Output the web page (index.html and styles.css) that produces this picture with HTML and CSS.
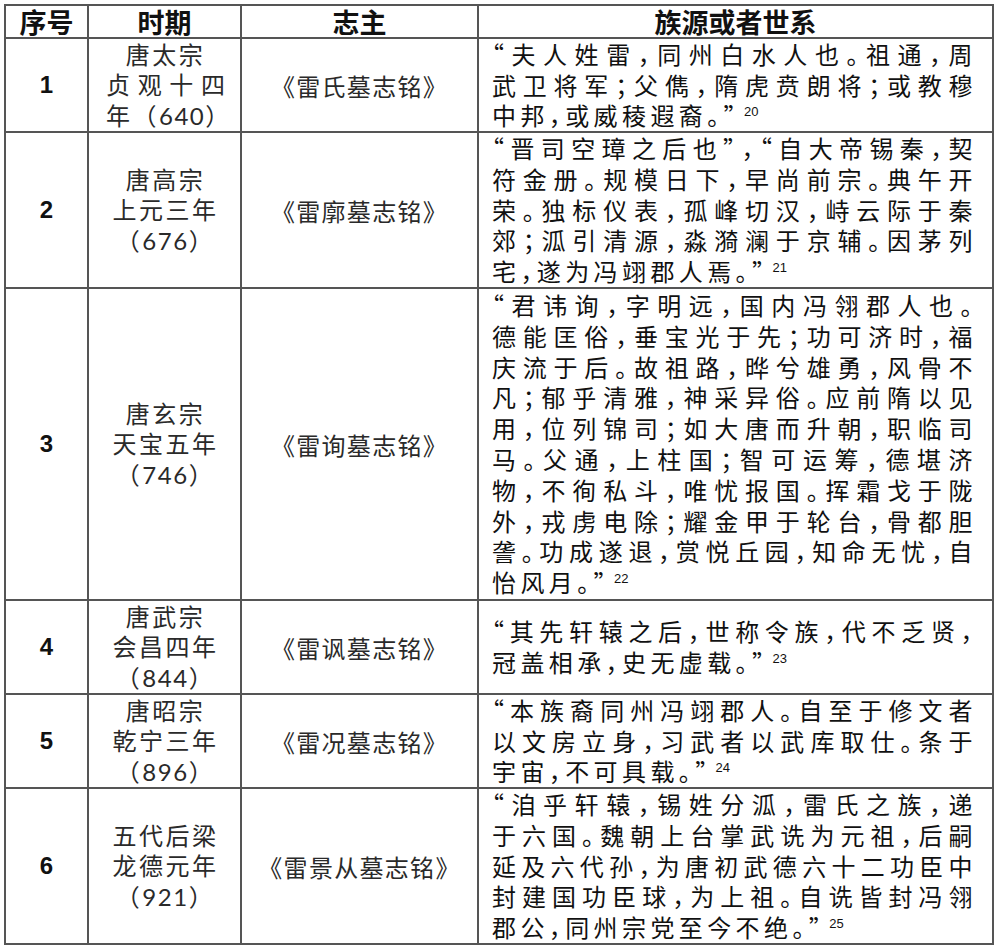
FILE: index.html
```html
<!DOCTYPE html>
<html lang="zh-CN">
<head>
<meta charset="utf-8">
<title>雷氏墓志铭族源表</title>
<link rel="stylesheet" href="styles.css">
</head>
<body>
<div class="tbl">
  <div class="c h">序号</div>
  <div class="c h">时期</div>
  <div class="c h">志主</div>
  <div class="c h">族源或者世系</div>

  <div class="c n">1</div>
  <div class="c p"><span class="ln">唐太宗</span><span class="ln j">贞观十四</span><span class="ln">年（<span class="d">640</span>）</span></div>
  <div class="c t">《雷氏墓志铭》</div>
  <div class="c s">
    <span class="ln j">“夫人姓雷，同州白水人也。祖通，周</span>
    <span class="ln j">武卫将军；父儁，隋虎贲朗将；或教穆</span>
    <span class="ln e">中邦，或威稜遐裔。”<sup class="fn">20</sup></span>
  </div>

  <div class="c n">2</div>
  <div class="c p"><span class="ln">唐高宗</span><span class="ln">上元三年</span><span class="ln">（<span class="d">676</span>）</span></div>
  <div class="c t">《雷廓墓志铭》</div>
  <div class="c s">
    <span class="ln j">“晋司空璋之后也”，“自大帝锡秦，契</span>
    <span class="ln j">符金册。规模日下，早尚前宗。典午开</span>
    <span class="ln j">荣。独标仪表，孤峰切汉，峙云际于秦</span>
    <span class="ln j">郊；泒引清源，淼漪澜于京辅。因茅列</span>
    <span class="ln e">宅，遂为冯翊郡人焉。”<sup class="fn">21</sup></span>
  </div>

  <div class="c n">3</div>
  <div class="c p"><span class="ln">唐玄宗</span><span class="ln">天宝五年</span><span class="ln">（<span class="d">746</span>）</span></div>
  <div class="c t">《雷询墓志铭》</div>
  <div class="c s">
    <span class="ln j">“君讳询，字明远，国内冯翎郡人也。</span>
    <span class="ln j">德能匡俗，垂宝光于先；功可济时，福</span>
    <span class="ln j">庆流于后。故祖路，晔兮雄勇，风骨不</span>
    <span class="ln j">凡；郁乎清雅，神采异俗。应前隋以见</span>
    <span class="ln j">用，位列锦司；如大唐而升朝，职临司</span>
    <span class="ln j">马。父通，上柱国；智可运筹，德堪济</span>
    <span class="ln j">物，不徇私斗，唯忧报国。挥霜戈于陇</span>
    <span class="ln j">外，戎虏电除；耀金甲于轮台，骨都胆</span>
    <span class="ln j">詟。功成遂退，赏悦丘园，知命无忧，自</span>
    <span class="ln e">怡风月。”<sup class="fn">22</sup></span>
  </div>

  <div class="c n">4</div>
  <div class="c p"><span class="ln">唐武宗</span><span class="ln">会昌四年</span><span class="ln">（<span class="d">844</span>）</span></div>
  <div class="c t">《雷讽墓志铭》</div>
  <div class="c s">
    <span class="ln j">“其先轩辕之后，世称令族，代不乏贤，</span>
    <span class="ln e">冠盖相承，史无虚载。”<sup class="fn">23</sup></span>
  </div>

  <div class="c n">5</div>
  <div class="c p"><span class="ln">唐昭宗</span><span class="ln">乾宁三年</span><span class="ln">（<span class="d">896</span>）</span></div>
  <div class="c t">《雷况墓志铭》</div>
  <div class="c s">
    <span class="ln j">“本族裔同州冯翊郡人。自至于修文者</span>
    <span class="ln j">以文房立身，习武者以武库取仕。条于</span>
    <span class="ln e">宇宙，不可具载。”<sup class="fn">24</sup></span>
  </div>

  <div class="c n">6</div>
  <div class="c p"><span class="ln">五代后梁</span><span class="ln">龙德元年</span><span class="ln">（<span class="d">921</span>）</span></div>
  <div class="c t">《雷景从墓志铭》</div>
  <div class="c s">
    <span class="ln j">“洎乎轩辕，锡姓分泒，雷氏之族，递</span>
    <span class="ln j">于六国。魏朝上台掌武诜为元祖，后嗣</span>
    <span class="ln j">延及六代孙，为唐初武德六十二功臣中</span>
    <span class="ln j">封建国功臣球，为上祖。自诜皆封冯翎</span>
    <span class="ln e">郡公，同州宗党至今不绝。”<sup class="fn">25</sup></span>
  </div>
</div>
</body>
</html>
```

FILE: styles.css
```css
html, body {
  margin: 0;
  padding: 0;
  background: #ffffff;
}

body {
  font-family: "Noto Sans CJK SC", "Noto Sans", sans-serif;
  color: #111;
}

.tbl {
  display: grid;
  grid-template-columns: 83px 153px 237px 515px;
  grid-template-rows: 33px 94px 156px 312px 94px 94px 156px;
  width: max-content;
  margin: 4px 0 0 4px;
  border-left: 2px solid #555;
  border-top: 2px solid #555;
}

.c {
  box-sizing: border-box;
  border-right: 2px solid #555;
  border-bottom: 2px solid #555;
  display: flex;
  flex-direction: column;
  justify-content: center;
  min-width: 0;
  overflow: hidden;
}

.h {
  align-items: center;
  font-weight: 700;
  font-size: 27px;
  line-height: 30px;
  color: #111;
}

.n {
  align-items: center;
  font-family: "Liberation Sans", Arial, sans-serif;
  font-weight: 700;
  font-size: 24px;
  color: #111;
}

.p {
  padding: 0 15px 0 17px;
  font-size: 24px;
  line-height: 30.4px;
  letter-spacing: 2.5px;
  color: #2a2a2a;
  text-align: center;
}

.p .ln {
  display: block;
  white-space: nowrap;
}

.p .j {
  letter-spacing: 0;
  text-align: justify;
  text-align-last: justify;
}

.d {
  font-family: "Lato", "Open Sans", sans-serif;
  font-weight: 400;
  letter-spacing: 1.5px;
}

.t {
  align-items: center;
  font-size: 24px;
  letter-spacing: 1.3px;
  color: #2a2a2a;
}

.s {
  padding: 0 15px 0 13px;
  font-size: 24px;
  line-height: 30.8px;
  letter-spacing: 4.4px;
  color: #111;
  font-feature-settings: "halt";
}

.s .ln {
  display: block;
  white-space: nowrap;
}

.s .j {
  text-align: justify;
  text-align-last: justify;
}

.s .e {
  text-align: left;
}

.fn {
  font-family: "Liberation Sans", Arial, sans-serif;
  font-size: 13px;
  line-height: 0;
  letter-spacing: 0;
  vertical-align: 9px;
  margin-left: 4px;
}
```
